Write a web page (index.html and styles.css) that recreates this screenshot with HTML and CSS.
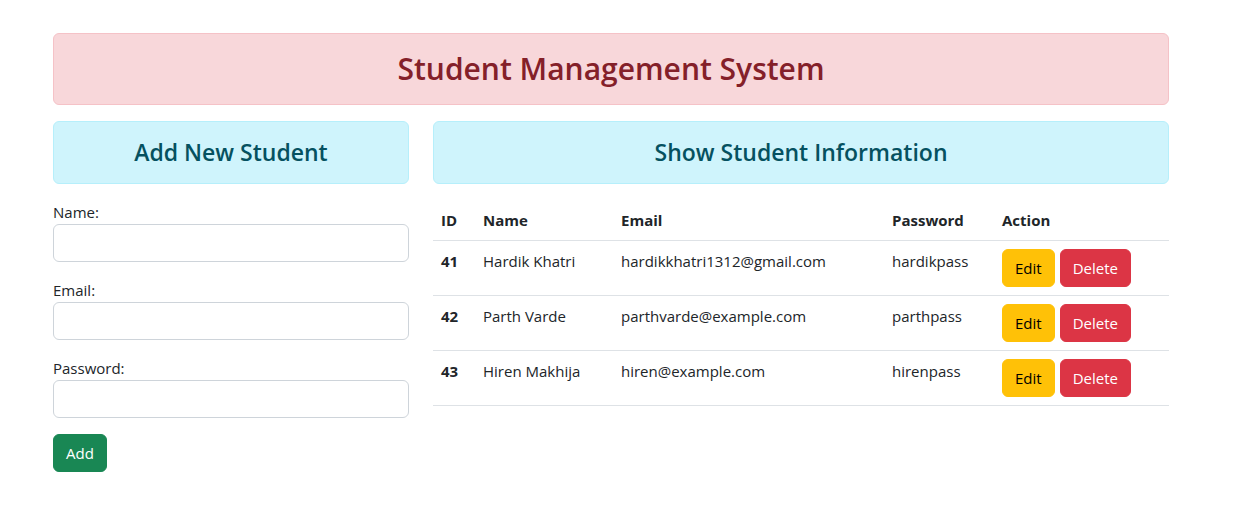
FILE: index.html
```html
<!DOCTYPE html>
<html lang="en">
<head>
<meta charset="utf-8">
<title>Student Management System</title>
<link rel="stylesheet" href="styles.css">
</head>
<body>
<div class="container">
  <div class="alert alert-danger banner">
    <h2 class="title">Student Management System</h2>
  </div>
  <div class="row">
    <div class="col-left">
      <div class="alert alert-info section">
        <h4 class="section-title">Add New Student</h4>
      </div>
      <form class="form">
        <div class="field">
          <label class="label" for="name">Name:</label>
          <input class="input" id="name" type="text">
        </div>
        <div class="field">
          <label class="label" for="email">Email:</label>
          <input class="input" id="email" type="email">
        </div>
        <div class="field">
          <label class="label" for="password">Password:</label>
          <input class="input" id="password" type="password">
        </div>
        <button type="button" class="btn btn-success">Add</button>
      </form>
    </div>
    <div class="col-right">
      <div class="alert alert-info section">
        <h4 class="section-title">Show Student Information</h4>
      </div>
      <table class="table">
        <colgroup>
          <col class="c-id"><col class="c-name"><col class="c-email"><col class="c-pass"><col class="c-act">
        </colgroup>
        <thead>
          <tr><th>ID</th><th>Name</th><th>Email</th><th>Password</th><th>Action</th></tr>
        </thead>
        <tbody>
          <tr>
            <th>41</th><td>Hardik Khatri</td><td>hardikkhatri1312@gmail.com</td><td>hardikpass</td>
            <td class="actions"><button type="button" class="btn btn-warning">Edit</button><button type="button" class="btn btn-danger">Delete</button></td>
          </tr>
          <tr>
            <th>42</th><td>Parth Varde</td><td>parthvarde@example.com</td><td>parthpass</td>
            <td class="actions"><button type="button" class="btn btn-warning">Edit</button><button type="button" class="btn btn-danger">Delete</button></td>
          </tr>
          <tr>
            <th>43</th><td>Hiren Makhija</td><td>hiren@example.com</td><td>hirenpass</td>
            <td class="actions"><button type="button" class="btn btn-warning">Edit</button><button type="button" class="btn btn-danger">Delete</button></td>
          </tr>
        </tbody>
      </table>
    </div>
  </div>
</div>
</body>
</html>
```

FILE: styles.css
```css
* { box-sizing: border-box; }
html, body { margin: 0; padding: 0; background: #fff; }
body {
  font-family: "Open Sans", "Liberation Sans", sans-serif;
  font-size: 16px;
  line-height: 24px;
  color: #212529;
}
.container {
  width: 1116px;
  margin-left: 53px;
  padding-top: 33px;
}
.alert {
  border: 1px solid transparent;
  border-radius: 6px;
  padding: 16px;
}
.alert-danger { background: #f8d7da; border-color: #f5c2c7; color: #842029; }
.alert-info { background: #cff4fc; border-color: #b6effb; color: #055160; }
.banner { margin-bottom: 16px; }
.title {
  margin: 0;
  text-align: center;
  font-size: 30px;
  line-height: 38px;
  font-weight: 600;
}
.row { display: flex; gap: 24px; align-items: flex-start; }
.col-left { width: 356px; flex: none; }
.col-right { width: 736px; flex: none; }
.section { margin-bottom: 16px; }
.section-title {
  margin: 0;
  text-align: center;
  font-size: 23px;
  line-height: 29px;
  font-weight: 600;
}
.form { margin: 0; }
.field { margin-bottom: 16px; }
.label { display: block; font-size: 15px; line-height: 24px; }
.input {
  display: block;
  width: 100%;
  height: 38px;
  border: 1px solid #ced4da;
  border-radius: 6px;
  padding: 6px 12px;
  font: inherit;
  background: #fff;
}
.btn {
  display: inline-block;
  vertical-align: top;
  height: 38px;
  padding: 6px 12px;
  border: 1px solid transparent;
  border-radius: 6px;
  font-family: inherit;
  font-size: 15px;
  line-height: 24px;
  cursor: pointer;
}
.btn-success { background: #198754; border-color: #198754; color: #fff; }
.btn-warning { background: #ffc107; border-color: #ffc107; color: #000; }
.btn-danger { background: #dc3545; border-color: #dc3545; color: #fff; }
.table {
  width: 100%;
  border-collapse: collapse;
  table-layout: fixed;
  font-size: 15px;
}
.c-id { width: 42px; }
.c-name { width: 138px; }
.c-email { width: 271px; }
.c-pass { width: 110px; }
.c-act { width: 175px; }
.table th, .table td {
  text-align: left;
  vertical-align: top;
  padding: 8px;
  border-bottom: 1px solid #dee2e6;
  line-height: 24px;
}
.table th { font-weight: 700; }
.actions { white-space: nowrap; font-size: 0; }
.actions .btn { font-size: 15px; }
.actions .btn + .btn { margin-left: 5px; }
```
